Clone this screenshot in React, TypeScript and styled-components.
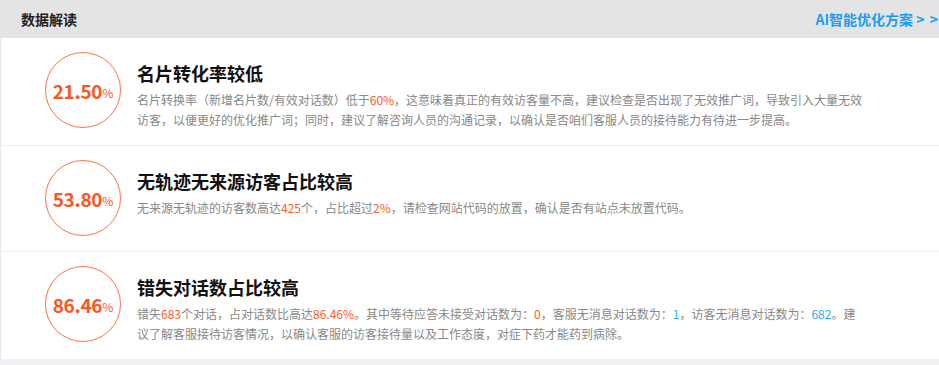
import React from 'react';
import styled, { createGlobalStyle } from 'styled-components';

const GlobalStyle = createGlobalStyle`
  html, body {
    margin: 0;
    padding: 0;
    background: #eef0f3;
    font-family: "Noto Sans CJK SC", "Noto Sans", "Liberation Sans", sans-serif;
  }
`;

type Part = string | { t: string; c: 'hot' | 'info' };

interface Insight {
  rate: string;
  title: string;
  desc: Part[];
}

const insights: Insight[] = [
  {
    rate: '21.50',
    title: '名片转化率较低',
    desc: [
      '名片转换率（新增名片数/有效对话数）低于',
      { t: '60%', c: 'hot' },
      '，这意味着真正的有效访客量不高，建议检查是否出现了无效推广词，导致引入大量无效访客，以便更好的优化推广词；同时，建议了解咨询人员的沟通记录，以确认是否咱们客服人员的接待能力有待进一步提高。',
    ],
  },
  {
    rate: '53.80',
    title: '无轨迹无来源访客占比较高',
    desc: [
      '无来源无轨迹的访客数高达',
      { t: '425', c: 'hot' },
      '个，占比超过',
      { t: '2%', c: 'hot' },
      '，请检查网站代码的放置，确认是否有站点未放置代码。',
    ],
  },
  {
    rate: '86.46',
    title: '错失对话数占比较高',
    desc: [
      '错失',
      { t: '683', c: 'hot' },
      '个对话，占对话数比高达',
      { t: '86.46%', c: 'hot' },
      '。其中等待应答未接受对话数为：',
      { t: '0', c: 'hot' },
      '，客服无消息对话数为：',
      { t: '1', c: 'info' },
      '，访客无消息对话数为：',
      { t: '682', c: 'info' },
      '。建议了解客服接待访客情况，以确认客服的访客接待量以及工作态度，对症下药才能药到病除。',
    ],
  },
];

export default function App() {
  return (
    <>
      <GlobalStyle />
      <Panel>
        <Header>
          <HeaderTitle>数据解读</HeaderTitle>
          <HeaderLink href="#">
            AI智能优化方案 <Arrows>&gt; &gt;</Arrows>
          </HeaderLink>
        </Header>
        <List>
          {insights.map((item) => (
            <Row key={item.title}>
              <Circle>
                <Rate>{item.rate}</Rate>
                <Percent>%</Percent>
              </Circle>
              <Content>
                <Title>{item.title}</Title>
                <Desc>
                  {item.desc.map((p, i) =>
                    typeof p === 'string' ? (
                      <React.Fragment key={i}>{p}</React.Fragment>
                    ) : (
                      <Mark key={i} tone={p.c}>
                        {p.t}
                      </Mark>
                    )
                  )}
                </Desc>
              </Content>
            </Row>
          ))}
        </List>
      </Panel>
    </>
  );
}

const Panel = styled.div`
  width: 939px;
  padding-bottom: 8px;
  background: #eef0f3;
  overflow: hidden;
`;

const Header = styled.div`
  height: 38px;
  display: flex;
  align-items: center;
  justify-content: space-between;
  padding: 0 0 0 21px;
  background: #e4e4e4;
  box-sizing: border-box;
`;

const HeaderTitle = styled.div`
  font-size: 14px;
  font-weight: bold;
  color: #222;
`;

const HeaderLink = styled.a`
  font-size: 14px;
  font-weight: bold;
  color: #1a9df5;
  text-decoration: none;
  white-space: nowrap;
`;

const Arrows = styled.span`
  letter-spacing: 1px;
`;

const List = styled.div`
  background: #fff;
  border-left: 1px solid #e6e8eb;
`;

const Row = styled.div`
  display: flex;
  align-items: flex-start;
  padding: 14px 0 15px 44px;
  border-bottom: 1px solid #eceff3;

  &:last-child {
    border-bottom: none;
  }
`;

const Circle = styled.div`
  width: 76px;
  height: 76px;
  flex: none;
  box-sizing: border-box;
  border: 1px solid #ff7245;
  border-radius: 50%;
  display: flex;
  align-items: center;
  justify-content: center;
  color: #fd5522;
`;

const Rate = styled.span`
  font-size: 19px;
  font-weight: bold;
  letter-spacing: -0.3px;
  line-height: 1;
`;

const Percent = styled.span`
  font-size: 12px;
  margin-top: 6px;
  line-height: 1;
`;

const Content = styled.div`
  margin-left: 16px;
  padding-top: 9px;
  width: 730px;
`;

const Title = styled.div`
  font-size: 18px;
  font-weight: bold;
  color: #111;
  line-height: 24px;
`;

const Desc = styled.div`
  margin-top: 5px;
  font-size: 12px;
  line-height: 20px;
  color: #888;
`;

const Mark = styled.span<{ tone: 'hot' | 'info' }>`
  color: ${(p) => (p.tone === 'hot' ? '#ff5b2a' : '#3aa8f2')};
`;
